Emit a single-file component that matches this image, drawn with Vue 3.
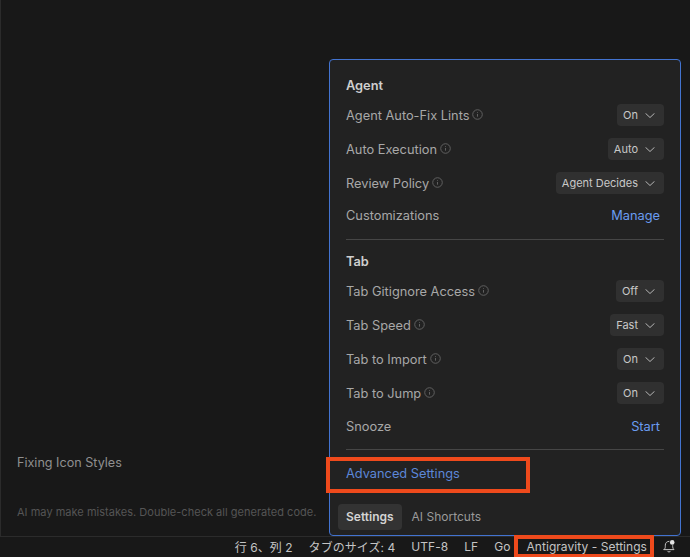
<script setup>
const agentRows = [
  { label: 'Agent Auto-Fix Lints', value: 'On' },
  { label: 'Auto Execution', value: 'Auto' },
  { label: 'Review Policy', value: 'Agent Decides' },
]
const tabRows = [
  { label: 'Tab Gitignore Access', value: 'Off' },
  { label: 'Tab Speed', value: 'Fast' },
  { label: 'Tab to Import', value: 'On' },
  { label: 'Tab to Jump', value: 'On' },
]
const statusItems = ['行 6、列 2', 'タブのサイズ: 4', 'UTF-8', 'LF', 'Go']
</script>

<template>
  <div class="app">
    <div class="editor">
      <div class="chat_title">Fixing Icon Styles</div>
      <div class="chat_note">AI may make mistakes. Double-check all generated code.</div>
    </div>

    <div class="status">
      <span v-for="s in statusItems" :key="s" class="status_item">{{ s }}</span>
      <span class="status_item status_ag">Antigravity - Settings</span>
      <svg class="bell" width="14" height="14" viewBox="0 0 14 14" fill="none">
        <path d="M2 10.600c.9-.8 1.300-1.600 1.300-3V6.200C3.300 4 4.800 2.400 7 2.300M10.700 6.600v1c0 1.400.4 2.200 1.300 3H2M5.600 12.200c.3.5.8.8 1.400.8s1.100-.3 1.400-.8" stroke="#c4c4c4" stroke-width="1" stroke-linecap="round" stroke-linejoin="round" />
        <circle cx="10.200" cy="3.400" r="2.300" fill="#e4e4e4" />
      </svg>
    </div>

    <div class="panel">
      <section class="section">
        <h4 class="section_title">Agent</h4>
        <div v-for="r in agentRows" :key="r.label" class="row">
          <span class="row_label">{{ r.label }}</span>
          <svg class="info" width="11" height="11" viewBox="0 0 12 12" fill="none">
            <circle cx="6" cy="6" r="5.200" stroke="#666" />
            <path d="M6 5.400v3M6 3.400v.8" stroke="#666" />
          </svg>
          <span class="select">
            {{ r.value }}
            <svg width="10" height="5" viewBox="0 0 10 5" fill="none">
              <path d="M.5.300L5 4.500 9.500.3" stroke="#b4b4b4" />
            </svg>
          </span>
        </div>
        <div class="row row_link">
          <span class="row_label">Customizations</span>
          <a class="link">Manage</a>
        </div>
      </section>

      <div class="divider"></div>

      <section class="section section_tab">
        <h4 class="section_title">Tab</h4>
        <div v-for="r in tabRows" :key="r.label" class="row">
          <span class="row_label">{{ r.label }}</span>
          <svg class="info" width="11" height="11" viewBox="0 0 12 12" fill="none">
            <circle cx="6" cy="6" r="5.200" stroke="#666" />
            <path d="M6 5.400v3M6 3.400v.8" stroke="#666" />
          </svg>
          <span class="select">
            {{ r.value }}
            <svg width="10" height="5" viewBox="0 0 10 5" fill="none">
              <path d="M.5.300L5 4.500 9.500.3" stroke="#b4b4b4" />
            </svg>
          </span>
        </div>
        <div class="row row_link">
          <span class="row_label">Snooze</span>
          <a class="link">Start</a>
        </div>
      </section>

      <div class="divider"></div>

      <div class="advanced">Advanced Settings</div>

      <div class="tabs">
        <span class="tab tab_active">Settings</span>
        <span class="tab">AI Shortcuts</span>
      </div>

      <div class="mark mark_advanced"></div>
    </div>

    <div class="mark mark_status"></div>
  </div>
</template>

<style>
html, body {
  margin: 0;
  background: #181818;
}
</style>

<style scoped>
.app {
  position: relative;
  width: 690px;
  height: 557px;
  display: flex;
  flex-direction: column;
  overflow: hidden;
  background: #181818;
  font-family: Inter, "Noto Sans CJK JP", sans-serif;
  font-size: 12.800px;
}
.editor {
  flex: 1;
  min-height: 0;
  display: flex;
  flex-direction: column;
  justify-content: flex-end;
  padding: 0 0 17px 16px;
  border-left: 1px solid #2b2b2b;
  border-bottom: 1px solid #2b2b2b;
}
.chat_title {
  font-size: 12.600px;
  color: #8f8f8f;
  margin-bottom: 35px;
}
.chat_note {
  font-size: 11px;
  letter-spacing: .02px;
  color: #555;
}
.status {
  height: 20px;
  box-sizing: border-box;
  padding: 0 14px 2px 0;
  display: flex;
  align-items: center;
  justify-content: flex-end;
  gap: 16px;
  font-size: 12px;
  letter-spacing: .05px;
  color: #c4c4c4;
}
.bell {
  margin-left: -1px;
}
.panel {
  position: absolute;
  left: 329px;
  top: 59px;
  width: 352px;
  height: 477px;
  box-sizing: border-box;
  padding: 0 16px;
  background: #222222;
  border: 1px solid #4273d0;
  border-radius: 4px;
}
.section {
  padding-top: 17px;
}
.section_tab {
  padding-top: 13px;
}
.section_title {
  margin: 0 0 3px;
  height: 18px;
  line-height: 18px;
  font-size: 12.800px;
  font-weight: 600;
  color: #cfcfcf;
}
.row {
  height: 34px;
  display: flex;
  align-items: center;
  gap: 3px;
}
.row_link {
  height: 30px;
  justify-content: space-between;
  margin-bottom: 9px;
}
.section_tab .row_link {
  height: 32px;
  margin-bottom: 7px;
}
.row_label {
  color: #a8a8a8;
}
.info {
  margin-top: -1px;
}
.select {
  margin-left: auto;
  height: 22px;
  box-sizing: border-box;
  display: flex;
  align-items: center;
  gap: 7px;
  padding: 0 9px 0 6px;
  border-radius: 4px;
  background: #303030;
  color: #c8c8c8;
  font-size: 11px;
}
.link {
  color: #6a9cf0;
  margin-right: 4px;
}
.divider {
  height: 1px;
  background: #464646;
}
.advanced {
  margin-top: 15px;
  height: 18px;
  line-height: 18px;
  color: #5c87d8;
}
.tabs {
  display: flex;
  gap: 2px;
  margin: 21px 0 0 -8px;
}
.tab {
  height: 26px;
  line-height: 26px;
  padding: 0 8px;
  border-radius: 4px;
  font-size: 12px;
  color: #9a9a9a;
}
.tab_active {
  background: #333333;
  color: #d4d4d4;
  font-weight: 600;
}
.mark {
  position: absolute;
  box-sizing: border-box;
  border: 4px solid #ef4a1c;
  pointer-events: none;
}
.mark_advanced {
  left: -4px;
  top: 397px;
  width: 204px;
  height: 36px;
}
.mark_status {
  left: 514px;
  top: 535px;
  width: 140px;
  height: 23px;
}
</style>
